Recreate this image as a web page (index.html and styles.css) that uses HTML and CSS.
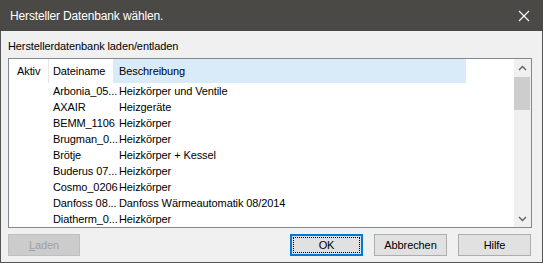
FILE: index.html
```html
<!DOCTYPE html>
<html lang="de">
<head>
  <meta charset="UTF-8" />
  <title>Hersteller Datenbank wählen.</title>
  <link rel="stylesheet" href="styles.css">
</head>
<body>
  <div class="window">
    <div class="titlebar">
      <span class="title">Hersteller Datenbank wählen.</span>
      <!-- close button -->
      <svg class="close" width="12" height="12" viewBox="0 0 12 12">
        <path d="M1 1 L11 11 M11 1 L1 11" stroke="#fff" stroke-width="1.1" fill="none" />
      </svg>
    </div>

    <div class="content">
      <div class="caption">Herstellerdatenbank laden/entladen</div>

      <div class="listbox">
        <div class="table">
          <div class="row head">
            <div class="col c-aktiv">Aktiv</div>
            <div class="col c-name">Dateiname</div>
            <div class="col c-desc hot">Beschreibung</div>
          </div>
          <div class="row"><div class="col c-aktiv"></div><div class="col c-name">Arbonia_05...</div><div class="col c-desc">Heizkörper und Ventile</div></div>
          <div class="row"><div class="col c-aktiv"></div><div class="col c-name">AXAIR</div><div class="col c-desc">Heizgeräte</div></div>
          <div class="row"><div class="col c-aktiv"></div><div class="col c-name">BEMM_1106</div><div class="col c-desc">Heizkörper</div></div>
          <div class="row"><div class="col c-aktiv"></div><div class="col c-name">Brugman_0...</div><div class="col c-desc">Heizkörper</div></div>
          <div class="row"><div class="col c-aktiv"></div><div class="col c-name">Brötje</div><div class="col c-desc">Heizkörper + Kessel</div></div>
          <div class="row"><div class="col c-aktiv"></div><div class="col c-name">Buderus 07...</div><div class="col c-desc">Heizkörper</div></div>
          <div class="row"><div class="col c-aktiv"></div><div class="col c-name">Cosmo_0206</div><div class="col c-desc">Heizkörper</div></div>
          <div class="row"><div class="col c-aktiv"></div><div class="col c-name">Danfoss 08...</div><div class="col c-desc">Danfoss Wärmeautomatik 08/2014</div></div>
          <div class="row"><div class="col c-aktiv"></div><div class="col c-name">Diatherm_0...</div><div class="col c-desc">Heizkörper</div></div>
        </div>

        <div class="scrollbar">
          <div class="sb-btn">
            <svg width="9" height="6" viewBox="0 0 9 6"><path d="M1 5 L4.5 1.5 L8 5" stroke="#606060" stroke-width="1.4" fill="none" /></svg>
          </div>
          <div class="sb-track"><div class="sb-thumb"></div></div>
          <div class="sb-btn">
            <svg width="9" height="6" viewBox="0 0 9 6"><path d="M1 1 L4.5 4.5 L8 1" stroke="#606060" stroke-width="1.4" fill="none" /></svg>
          </div>
        </div>
      </div>

      <div class="buttons">
        <button class="btn disabled" disabled><u>L</u>aden</button>
        <div class="spacer"></div>
        <button class="btn default"><span class="focus">OK</span></button>
        <button class="btn">Abbrechen</button>
        <button class="btn">Hilfe</button>
      </div>
    </div>
  </div>
</body>
</html>
```

FILE: styles.css
```css
* {
  box-sizing: border-box;
}
body {
  margin: 0;
  background: #fff;
  font-family: 'Liberation Sans', Arial, sans-serif;
  font-size: 11px;
  letter-spacing: -0.1px;
  color: #000;
}
.window {
  width: 543px;
  height: 263px;
  border: 1px solid #565656;
  border-top: none;
  background: #f0f0f0;
  display: flex;
  flex-direction: column;
}
.titlebar {
  height: 31px;
  margin: 0 -1px;
  background: #4a4946;
  color: #fff;
  display: flex;
  align-items: center;
  padding: 0 13px 0 10px;
}
.title {
  flex: 1;
  font-size: 12px;
  letter-spacing: -0.15px;
  padding-top: 1px;
}
.close {
  display: block;
}
.content {
  flex: 1;
  padding: 8px 10px 0 7px;
  display: flex;
  flex-direction: column;
}
.caption {
  line-height: 15px;
  margin-bottom: 4px;
}
.listbox {
  height: 170px;
  border: 1px solid #828790;
  background: #fff;
  display: flex;
}
.table {
  flex: 1;
}
.row {
  display: flex;
  height: 16px;
  align-items: center;
  white-space: nowrap;
}
.row.head {
  height: 24px;
  align-items: stretch;
}
.row.head .col {
  display: flex;
  align-items: center;
}
.c-aktiv {
  width: 40px;
  padding-left: 8px;
}
.head .c-aktiv {
  border-right: 1px solid #e5e5e5;
}
.c-name {
  width: 64px;
  padding-left: 4px;
}
.c-desc {
  width: 353px;
  padding-left: 6px;
}
.hot {
  background: #d9ebf9;
}
.scrollbar {
  width: 17px;
  background: #f0f0f0;
  display: flex;
  flex-direction: column;
}
.sb-btn {
  height: 17px;
  display: flex;
  align-items: center;
  justify-content: center;
}
.sb-track {
  flex: 1;
  padding: 1px 1px 0 0;
}
.sb-thumb {
  height: 33px;
  background: #cdcdcd;
}
.buttons {
  display: flex;
  margin-top: 6px;
  gap: 11px;
  padding-right: 1px;
}
.spacer {
  flex: 1;
}
.btn {
  width: 73px;
  height: 22px;
  border: 1px solid #adadad;
  background: #e1e1e1;
  font-family: inherit;
  font-size: 11px;
  letter-spacing: -0.1px;
  color: #000;
  padding: 0;
}
.btn.disabled {
  width: 72px;
  background: #cccccc;
  border-color: #bfbfbf;
  color: #a0a0a0;
}
.btn.default {
  border: 2px solid #0078d7;
  padding: 1px;
}
.focus {
  display: block;
  height: 100%;
  border: 1px dotted #000;
  line-height: 14px;
}
```
